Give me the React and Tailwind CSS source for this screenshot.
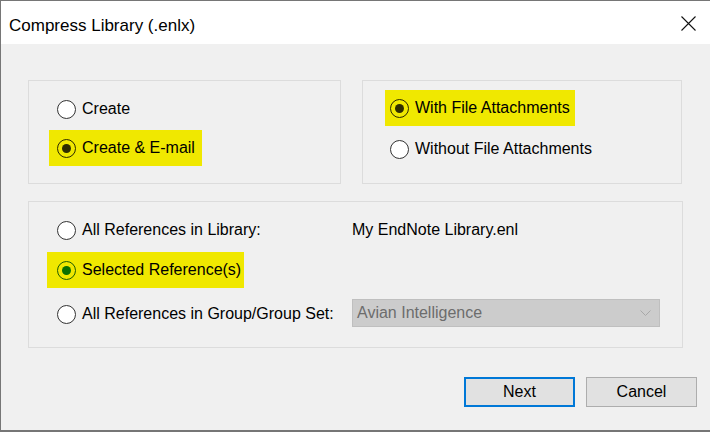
import React from "react";

const font = { fontFamily: '"Liberation Sans", Arial, sans-serif' };

const Radio = ({ checked, ring = "border-[#333333]", fill = "bg-white", dot = "bg-[#333333]" }) => (
  <span
    className={`flex h-[19px] w-[19px] shrink-0 items-center justify-center rounded-full border ${ring} ${fill}`}
  >
    {checked && <span className={`h-[9px] w-[9px] rounded-full ${dot}`} />}
  </span>
);

const Option = ({ label, checked, mark, pad = "pl-0 pr-0", radio = {} }) => (
  <div className="flex h-[36px] items-center">
    <span
      className={`flex h-[36px] items-center gap-[6px] ${pad} ${mark ? "bg-[#f0e800]" : ""}`}
    >
      <Radio checked={checked} {...radio} />
      <span className="text-[16px] leading-none text-black">{label}</span>
    </span>
  </div>
);

const marked = { ring: "border-[#2b2900]", fill: "bg-[#f0e800]", dot: "bg-[#2f2d00]" };
const markedGreen = { ring: "border-[#1f5c00]", fill: "bg-[#f0e800]", dot: "bg-[#0a7000]" };

export default function App() {
  return (
    <div
      style={font}
      className="flex h-[432px] w-[710px] flex-col border-l border-t border-b-2 border-[#767676] bg-[#f0f0f0]"
    >
      {/* title bar */}
      <div className="flex h-[43px] shrink-0 items-center justify-between bg-white pl-[8px] pr-[14px]">
        <span className="mt-[6px] text-[17px] leading-none text-black">Compress Library (.enlx)</span>
        <svg width="15" height="15" viewBox="0 0 15 15" className="mt-[1px]">
          <path d="M0.5 0.5 L14.5 14.5 M14.5 0.5 L0.5 14.5" stroke="#111" strokeWidth="1.1" />
        </svg>
      </div>

      <div className="flex flex-col pl-[27px] pt-[36px]">
        <div className="flex gap-[21px]">
          {/* create options */}
          <div className="flex h-[104px] w-[313px] flex-col gap-[3px] border border-[#dcdcdc] pl-[28px] pt-[10px]">
            <Option label="Create" />
            <div className="-ml-[8px]">
              <Option label="Create & E-mail" checked mark pad="pl-[8px] pr-[7px]" radio={marked} />
            </div>
          </div>

          {/* attachment options */}
          <div className="flex h-[104px] w-[320px] flex-col gap-[5px] border border-[#dcdcdc] pl-[27px] pt-[9px]">
            <div className="-ml-[5px]">
              <Option label="With File Attachments" checked mark pad="pl-[5px] pr-[5px]" radio={marked} />
            </div>
            <Option label="Without File Attachments" />
          </div>
        </div>

        {/* reference scope */}
        <div className="mt-[17px] grid h-[147px] w-[655px] grid-cols-[295px_1fr] border border-[#dcdcdc] pl-[28px] pt-[10px]">
          <div className="flex flex-col gap-[6px]">
            <Option label="All References in Library:" />
            <div className="-ml-[10px] -mt-[2px] mb-[2px]">
              <Option label="Selected Reference(s)" checked mark pad="pl-[10px] pr-[3px]" radio={markedGreen} />
            </div>
            <Option label="All References in Group/Group Set:" />
          </div>
          <div className="flex flex-col">
            <div className="flex h-[36px] items-center text-[16px] text-black">My EndNote Library.enl</div>
            <div className="mt-[51px] flex h-[28px] w-[308px] items-center justify-between border border-[#bfbfbf] bg-[#cccccc] pl-[4px] pr-[8px]">
              <span className="text-[16px] text-[#6d6d6d]">Avian Intelligence</span>
              <svg width="11" height="6" viewBox="0 0 11 6">
                <path d="M0.5 0.5 L5.5 5.5 L10.5 0.5" fill="none" stroke="#a8a8a8" strokeWidth="1" />
              </svg>
            </div>
          </div>
        </div>
      </div>

      {/* dialog buttons */}
      <div className="mt-[29px] flex justify-end gap-[11px] pr-[13px]">
        <button className="flex h-[30px] w-[111px] items-center justify-center border-2 border-[#0078d7] bg-[#e1e1e1] text-[16px] text-black">
          Next
        </button>
        <button className="flex h-[30px] w-[111px] items-center justify-center border border-[#adadad] bg-[#e1e1e1] text-[16px] text-black">
          Cancel
        </button>
      </div>
    </div>
  );
}
